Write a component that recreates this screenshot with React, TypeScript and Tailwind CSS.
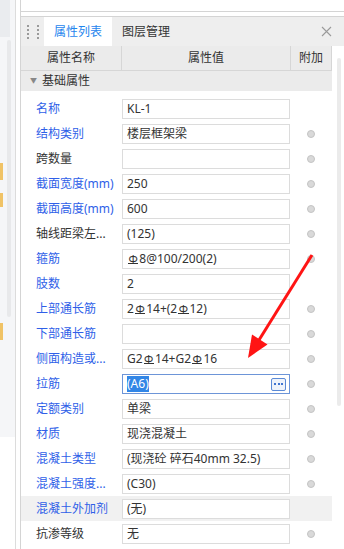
import React from "react";

type Row = {
  label: string;
  blue: boolean;
  value: string;
  dot: boolean;
  active?: boolean;
  highlight?: boolean;
};

const rows: Row[] = [
  { label: "名称", blue: true, value: "KL-1", dot: false },
  { label: "结构类别", blue: true, value: "楼层框架梁", dot: true },
  { label: "跨数量", blue: false, value: "", dot: true },
  { label: "截面宽度(mm)", blue: true, value: "250", dot: true },
  { label: "截面高度(mm)", blue: true, value: "600", dot: true },
  { label: "轴线距梁左...", blue: false, value: "(125)", dot: true },
  { label: "箍筋", blue: true, value: "#8@100/200(2)", dot: true },
  { label: "肢数", blue: true, value: "2", dot: false },
  { label: "上部通长筋", blue: true, value: "2#14+(2#12)", dot: true },
  { label: "下部通长筋", blue: true, value: "", dot: true },
  { label: "侧面构造或...", blue: true, value: "G2#14+G2#16", dot: true },
  { label: "拉筋", blue: true, value: "(A6)", dot: true, active: true },
  { label: "定额类别", blue: true, value: "单梁", dot: true },
  { label: "材质", blue: true, value: "现浇混凝土", dot: true },
  { label: "混凝土类型", blue: true, value: "(现浇砼 碎石40mm 32.5)", dot: true },
  { label: "混凝土强度...", blue: true, value: "(C30)", dot: true },
  { label: "混凝土外加剂", blue: true, value: "(无)", dot: false, highlight: true },
  { label: "抗渗等级", blue: false, value: "无", dot: true },
  { label: "", blue: false, value: "", dot: false },
];

function Rebar() {
  return (
    <span className="inline-block text-[11px] leading-[9px] border-b border-[#333] align-[3px] mx-[1px] px-[0.5px]">
      Φ
    </span>
  );
}

function Value({ s }: { s: string }) {
  const parts = s.split("#");
  return (
    <>
      {parts.map((p, i) => (
        <React.Fragment key={i}>
          {i > 0 && <Rebar />}
          {p}
        </React.Fragment>
      ))}
    </>
  );
}

function LeftStrip() {
  return (
    <div className="relative w-[16px] h-full border-r border-[#dcdcdc] shrink-0">
      <div className="h-[437px] bg-[#f5f6f8] flex flex-col">
        <div className="w-[10px] h-[37px] bg-[#eaecef]" />
      </div>
      <div className="absolute left-[7px] top-[40px] w-[4px] h-[277px] bg-[#e8e9eb] rounded-sm" />
      <div className="absolute left-0 top-[163px] w-[3px] h-[17px] bg-[#f0c366]" />
      <div className="absolute left-0 top-[193px] w-[3px] h-[14px] bg-[#f0c366]" />
      <div className="absolute left-0 top-[323px] w-[3px] h-[17px] bg-[#f0c366]" />
    </div>
  );
}

function DragHandle() {
  return (
    <div className="grid grid-cols-2 gap-x-[3px] gap-y-[2px]">
      {Array.from({ length: 8 }).map((_, i) => (
        <div key={i} className="w-[2px] h-[2px] bg-[#9a9a9a]" />
      ))}
    </div>
  );
}

export default function App() {
  return (
    <div className="relative w-[344px] h-[549px] overflow-hidden bg-white flex text-[12px] text-[#333] font-['Noto_Sans','Noto_Sans_CJK_SC',sans-serif]">
      <LeftStrip />
      <div className="w-[4px] shrink-0" />
      <div className="flex-1 flex flex-col border-l border-[#d4d4d4] min-w-0">
        <div className="h-[12px] border-b border-[#d4d4d4] shrink-0" />
        <div className="h-[4px] shrink-0" />
        <div className="flex flex-col border-t border-[#d4d4d4]">
          {/* tab bar */}
          <div className="h-[29px] bg-[#eeeeee] flex items-center">
            <div className="pl-[6px] w-[23px]">
              <DragHandle />
            </div>
            <div className="w-[68px] h-full bg-white flex items-center justify-center text-[#1f86ee]">
              属性列表
            </div>
            <div className="w-[68px] h-full flex items-center justify-center text-[#333]">
              图层管理
            </div>
            <div className="flex-1" />
            <svg width="11" height="11" viewBox="0 0 11 11" className="mr-[12px]">
              <path d="M1 1 L10 10 M10 1 L1 10" stroke="#9a9a9a" strokeWidth="1.1" />
            </svg>
          </div>
          {/* body */}
          <div className="flex">
            <div className="w-[311px] flex flex-col shrink-0">
              {/* header */}
              <div className="h-[25px] flex bg-[#ebebeb] border-b border-[#d6d6d6]">
                <div className="w-[101px] border-r border-[#d6d6d6] flex items-center justify-center">
                  属性名称
                </div>
                <div className="w-[169px] border-r border-[#d6d6d6] flex items-center justify-center">
                  属性值
                </div>
                <div className="w-[41px] border-r border-[#d6d6d6] flex items-center justify-center">
                  附加
                </div>
              </div>
              {/* group */}
              <div className="h-[20px] bg-[#ebebeb] flex items-center">
                <span className="ml-[9px] mr-[5px] text-[7px] text-[#888]">▼</span>
                <span>基础属性</span>
              </div>
              <div className="h-[5px]" />
              {rows.map((r, i) => (
                <div
                  key={i}
                  className={`h-[25px] flex items-center pt-[1px] shrink-0 ${r.highlight ? "bg-[#f1f1f1]" : ""}`}
                >
                  <div
                    className={`w-[101px] pl-[15px] whitespace-nowrap overflow-hidden ${r.blue ? "text-[#2f5fe8]" : "text-[#333]"}`}
                  >
                    {r.label}
                  </div>
                  <div
                    className={`w-[168px] h-[20px] bg-white flex items-center pl-[4px] pr-[3px] whitespace-nowrap overflow-hidden border ${r.active ? "border-[#6d95d8]" : "border-[#dcdcdc]"}`}
                  >
                    {r.active ? (
                      <>
                        <span className="bg-[#3286e6] text-white leading-[16px]">{r.value}</span>
                        <div className="flex-1" />
                        <div className="w-[15px] h-[13px] border border-[#5b8ad6] rounded-[2px] bg-[#eef3fb] flex items-center justify-center gap-[1.5px]">
                          <div className="w-[2px] h-[2px] bg-[#3f74d0]" />
                          <div className="w-[2px] h-[2px] bg-[#3f74d0]" />
                          <div className="w-[2px] h-[2px] bg-[#3f74d0]" />
                        </div>
                      </>
                    ) : (
                      <Value s={r.value} />
                    )}
                  </div>
                  <div className="flex-1 flex items-center justify-center">
                    {r.dot && (
                      <div className="w-[8px] h-[8px] rounded-full bg-[#d9d9d9] border border-[#c4c4c4]" />
                    )}
                  </div>
                </div>
              ))}
            </div>
            <div className="flex-1 pl-[5px] pt-[12px]">
              <div className="w-[4px] h-[348px] bg-[#ebebeb] rounded-sm" />
            </div>
          </div>
        </div>
      </div>
      <svg
        className="absolute inset-0 pointer-events-none"
        width="344"
        height="549"
        viewBox="0 0 344 549"
      >
        <line x1="312" y1="255" x2="259" y2="340" stroke="#ff1414" strokeWidth="3" />
        <polygon points="248,358 267.5,344.5 252,334.5" fill="#ff1414" />
      </svg>
    </div>
  );
}
